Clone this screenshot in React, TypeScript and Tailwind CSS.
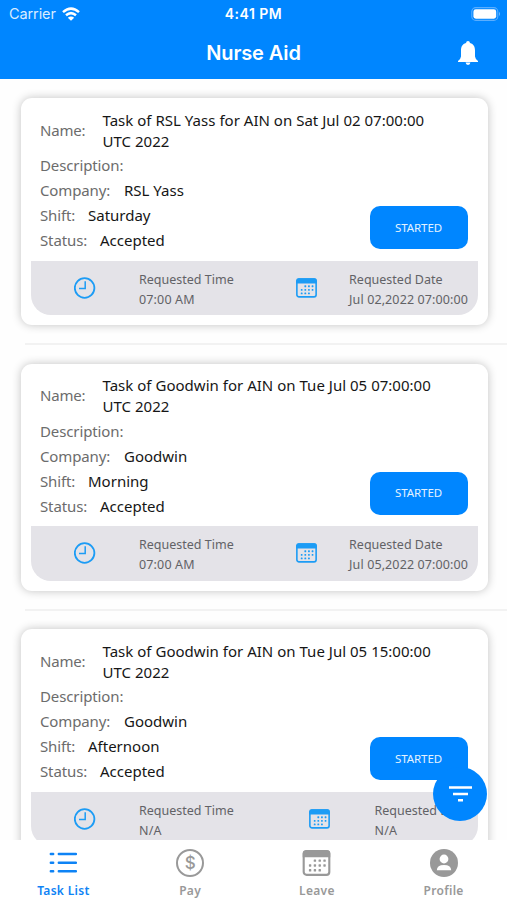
import React from "react";

type Task = {
  name: string;
  company: string;
  shift: string;
  time: string;
  date: string;
};

const tasks: Task[] = [
  { name: "Task of RSL Yass for AIN on Sat Jul 02 07:00:00 UTC 2022", company: "RSL Yass", shift: "Saturday", time: "07:00 AM", date: "Jul 02,2022 07:00:00" },
  { name: "Task of Goodwin for AIN on Tue Jul 05 07:00:00 UTC 2022", company: "Goodwin", shift: "Morning", time: "07:00 AM", date: "Jul 05,2022 07:00:00" },
  { name: "Task of Goodwin for AIN on Tue Jul 05 15:00:00 UTC 2022", company: "Goodwin", shift: "Afternoon", time: "N/A", date: "N/A" },
];

const dots = [
  [13, 11], [18, 11], [23, 11],
  [8, 16], [13, 16], [18, 16], [23, 16],
  [8, 21], [13, 21], [18, 21],
];

function CalendarIcon({ className }: { className: string }) {
  return (
    <svg viewBox="0 0 29 27" className={className} fill="none">
      <rect x="1.2" y="1.2" width="26.6" height="24.6" rx="3" stroke="currentColor" strokeWidth="2.2" />
      <path d="M0.2 7.4V3.5Q0.2 0.2 3.5 0.2H25.5Q28.8 0.2 28.8 3.5V7.4Z" fill="currentColor" />
      {dots.map(([x, y]) => (
        <rect key={`${x}-${y}`} x={x - 1.4} y={y - 1.2} width="2.5" height="2.5" rx="0.6" fill="currentColor" />
      ))}
    </svg>
  );
}

function ClockIcon() {
  return (
    <svg viewBox="0 0 22 22" className="h-[22px] w-[22px] shrink-0 text-[#1c9cf5]" fill="none" stroke="currentColor">
      <circle cx="10.6" cy="11" r="9.8" strokeWidth="1.8" />
      <path d="M11.2 4.2V11.4H5" strokeWidth="1.5" />
    </svg>
  );
}

function Row({ label, value, gap }: { label: string; value?: string; gap?: string }) {
  return (
    <div className="flex h-[25px] items-center text-[15px] leading-[25px]">
      <span className={`tracking-[-0.12px] text-[#6c6c6c] ${gap ?? ""}`}>{label}</span>
      <span className="text-[#161616]">{value}</span>
    </div>
  );
}

function TaskCard({ task }: { task: Task }) {
  return (
    <div className="h-[265.5px] shrink-0">
      <article className="ml-[20.5px] flex h-[227px] w-[467px] flex-col rounded-[11px] bg-white px-[10px] pt-[12px] shadow-[0_0_10px_rgba(0,0,0,0.24)]">
        <div className="flex h-[42px] items-center pl-[9.5px] text-[15px]">
          <span className="w-[62.5px] shrink-0 pb-[2px] tracking-[-0.2px] text-[#6c6c6c]">Name:</span>
          <span className="w-[335px] pb-px leading-[21px] tracking-[0.02px] text-[#161616]">{task.name}</span>
        </div>
        <div className="mt-[1px] flex h-[107.5px] shrink-0 justify-between pr-[9.5px] pl-[9.5px]">
          <div>
            <Row label="Description:" />
            <Row label="Company:" value={task.company} gap="w-[84px]" />
            <Row label="Shift:" value={task.shift} gap="w-[48px]" />
            <Row label="Status:" value="Accepted" gap="w-[60px]" />
          </div>
          <button className="mt-[53px] h-[43px] w-[98px] rounded-[10px] bg-[#0086ff] pr-px text-[11.5px] tracking-[-0.05px] text-[#e4f2ff]">STARTED</button>
        </div>
        <div className="flex h-[54.5px] items-center justify-between rounded-b-[20px] bg-[#e4e3e8] pr-[9.5px] pl-[43px] text-[12.5px] leading-[20px] text-[#626266]">
          <div className="flex items-center">
            <ClockIcon />
            <div className="ml-[43.5px] pt-[4px]">
              <div>Requested Time</div>
              <div className="tracking-[0.15px]">{task.time}</div>
            </div>
          </div>
          <div className={`flex items-center ${task.date === "N/A" ? "gap-[45px]" : "gap-[32px]"}`}>
            <CalendarIcon className="h-[20px] w-[21px] text-[#1c9cf5]" />
            <div className="pt-[4px]">
              <div>Requested Date</div>
              <div className="tracking-[0.11px]">{task.date}</div>
            </div>
          </div>
        </div>
      </article>
      <div className="mt-[18px] ml-[25px] h-[2px] bg-[#f2f2f2]" />
    </div>
  );
}

function Tab({ label, active, children }: { label: string; active?: boolean; children: React.ReactNode }) {
  return (
    <div className={`flex flex-1 flex-col items-center pt-[8px] ${active ? "text-[#0e83f5]" : "text-[#999999]"}`}>
      <div className="flex h-[30px] items-center">{children}</div>
      <span className="mt-[4px] text-[12px] leading-[18px] font-semibold tracking-[0.3px]">{label}</span>
    </div>
  );
}

export default function App() {
  return (
    <div className="relative flex h-[900px] w-[507px] flex-col overflow-hidden bg-[#fefefe] font-['Noto_Sans',sans-serif]">
      <header className="h-[79px] shrink-0 bg-[#0086ff] font-['Inter',sans-serif] text-white">
        <div className="grid h-[27px] grid-cols-3 items-center pr-[6px] pl-[9px]">
          <div className="flex items-center gap-[6px] text-[14.5px] text-[#d9ecff]">
            <span className="tracking-[-0.1px]">Carrier</span>
            <svg viewBox="0 0 18 14" className="h-[14px] w-[18px]" fill="none" stroke="white" strokeWidth="2.5">
              <path d="M1 5.1Q9 -1.9 17 5.1" />
              <path d="M4 8.3Q9 4 14 8.3" />
              <path d="M9 13.8L5.8 10.8Q9 8 12.2 10.8Z" fill="white" stroke="none" />
            </svg>
          </div>
          <span className="pr-[3px] text-center text-[14px] font-semibold tracking-[0.5px]">4:41 PM</span>
          <svg viewBox="0 0 30 14" className="h-[14px] w-[30px] justify-self-end" fill="none">
            <rect x="0.8" y="0.6" width="26" height="12.8" rx="4" stroke="#5aaeff" strokeWidth="1.1" />
            <rect x="2.4" y="2.3" width="22.8" height="9.4" rx="2.4" fill="white" />
            <path d="M28 4.8Q30 7 28 9.2Z" fill="#70baff" />
          </svg>
        </div>
        <div className="grid h-[51px] grid-cols-3 items-center">
          <h1 className="col-start-2 text-center text-[20px] font-semibold tracking-[-0.1px]">Nurse Aid</h1>
          <svg viewBox="0 0 20 24" className="mr-[29px] h-[24px] w-[20px] justify-self-end" fill="white">
            <path d="M10 0Q11.8 0 12 2C15.7 3 17 6 17 9.5V15.5Q17.1 17.6 20 20V21H0V20Q2.9 17.6 3 15.5V9.5C3 6 4.3 3 8 2Q8.2 0 10 0Z" />
            <path d="M7.6 21.6H12.4Q12.2 24 10 24Q7.8 24 7.6 21.6Z" />
          </svg>
        </div>
      </header>

      <main className="flex min-h-0 flex-1 flex-col overflow-hidden pt-[19px]">
        {tasks.map((task) => (
          <TaskCard key={task.name} task={task} />
        ))}
      </main>

      <nav className="flex h-[60px] shrink-0 bg-white">
        <Tab label="Task List" active>
          <svg viewBox="0 0 28 22" className="h-[22px] w-[28px]" fill="none" stroke="currentColor" strokeWidth="2.4" strokeLinecap="round">
            <path d="M1.8 2H4.2M9.8 2H27M1.8 10.7H4.2M9.8 10.7H27M1.8 19.3H4.2M9.8 19.3H27" />
          </svg>
        </Tab>
        <Tab label="Pay">
          <div className="flex h-[28px] w-[28px] items-center justify-center rounded-full border-2 border-current font-['Inter',sans-serif] text-[17px] leading-none font-medium">$</div>
        </Tab>
        <Tab label="Leave">
          <CalendarIcon className="h-[26px] w-[29px]" />
        </Tab>
        <Tab label="Profile">
          <svg viewBox="0 0 28 28" className="h-[28px] w-[28px]">
            <circle cx="14" cy="14" r="14" fill="currentColor" />
            <circle cx="14" cy="10" r="4.4" fill="white" />
            <path d="M6.8 21.2Q7 15.9 14 15.9Q21 15.9 21.2 21.2Z" fill="white" />
          </svg>
        </Tab>
      </nav>

      <button className="absolute top-[767px] left-[433px] flex h-[54px] w-[54px] items-center justify-center rounded-full bg-[#0086ff]">
        <svg viewBox="0 0 23 16" className="h-[16px] w-[23px]" stroke="white" strokeWidth="2.6">
          <path d="M0 1.5H23M4 8H19M9 14.2H14" />
        </svg>
      </button>
    </div>
  );
}
